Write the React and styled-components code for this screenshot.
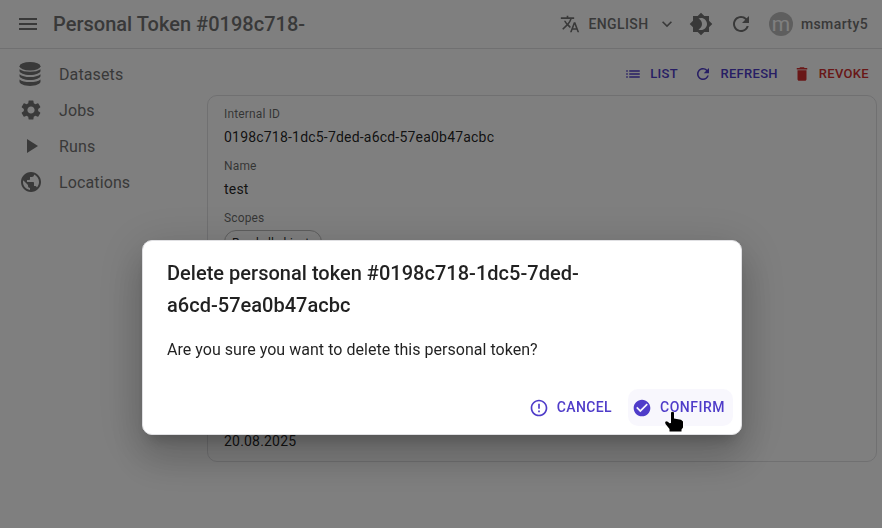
import React from "react";
import styled, { createGlobalStyle } from "styled-components";
import {
  MdMenu, MdTranslate, MdExpandMore, MdBrightness4, MdRefresh, MdList, MdDelete,
  MdSettings, MdPlayArrow, MdPublic, MdErrorOutline, MdCheckCircle,
} from "react-icons/md";

const GlobalStyle = createGlobalStyle`
  *, *::before, *::after { box-sizing: border-box; }
  html, body { margin: 0; height: 528px; overflow: hidden; }
  body { background: #fff; color: rgba(0, 0, 0, 0.87); font-family: Roboto, sans-serif; }
`;

const Page = styled.div`
  height: 528px;
  display: flex;
  flex-direction: column;
`;

const AppBar = styled.header`
  height: 49px;
  flex: none;
  display: flex;
  align-items: center;
  padding: 0 14px 0 16px;
  border-bottom: 1px solid #e0e0e3;
  color: #737373;
  svg { display: block; flex: none; }
`;

const BarTitle = styled.h1`
  margin: 0 auto 0 13px;
  font-size: 20px;
  font-weight: 500;
  line-height: 32px;
  letter-spacing: 0.02px;
`;

const BarButton = styled.button`
  display: flex;
  align-items: center;
  gap: ${(p) => p.$gap || 0}px;
  margin: 0 0 0 ${(p) => p.$space || 0}px;
  padding: 0;
  border: 0;
  background: none;
  color: inherit;
  font: 500 14px/24.5px Roboto, sans-serif;
  letter-spacing: 0.4px;
`;

const Avatar = styled.span`
  width: 24px;
  height: 24px;
  border-radius: 50%;
  display: flex;
  align-items: center;
  justify-content: center;
  background: #bdbdbd;
  color: #fff;
  font-size: 21px;
  font-weight: 400;
  line-height: 21px;
  letter-spacing: 0;
`;

const Body = styled.div`
  flex: 1;
  display: flex;
`;

const Sidebar = styled.nav`
  width: 207px;
  flex: none;
  padding-top: 8px;
`;

const NavItem = styled.a`
  height: 36px;
  display: flex;
  align-items: center;
  padding-left: 16px;
  color: #737373;
  font-size: 16px;
  line-height: 24px;
  letter-spacing: 0.12px;
`;

const NavIcon = styled.span`
  width: 43px;
  padding: 0 0 2px ${(p) => p.$inset}px;
  display: flex;
`;

const Main = styled.main`
  width: 670px;
`;

const Actions = styled.div`
  height: 46px;
  display: flex;
  justify-content: flex-end;
  align-items: center;
  gap: 15px;
  padding: 3px 8px 0 0;
`;

const ActionButton = styled.button`
  display: flex;
  align-items: center;
  gap: 8px;
  margin-right: ${(p) => p.$space || 0}px;
  padding: 0;
  border: 0;
  background: none;
  color: ${(p) => p.$color || "#4f3cc9"};
  font: 500 13px/23px Roboto, sans-serif;
  letter-spacing: 0.3px;
  svg { display: block; }
`;

const Card = styled.section`
  height: 367px;
  padding: 8px 16px;
  border: 1px solid #e0e0e3;
  border-radius: 10px;
`;

const Field = styled.div`
  height: 52px;
`;

const Label = styled.div`
  height: 20px;
  color: rgba(0, 0, 0, 0.6);
  font-size: 12px;
  line-height: 20px;
  letter-spacing: 0.15px;
`;

const Value = styled.div`
  padding-top: 3px;
  font-size: 14px;
  line-height: 20px;
  letter-spacing: 0.2px;
`;

const Chip = styled.span`
  display: inline-flex;
  align-items: center;
  height: 24px;
  width: 98px;
  margin-top: 2px;
  padding: 2px 7px 0;
  border: 1px solid #bdbdbd;
  border-radius: 12px;
  font-size: 12px;
  letter-spacing: -0.08px;
  white-space: nowrap;
`;

const DateField = styled.div`
  height: 52px;
  margin-top: 148px;
`;

const Backdrop = styled.div`
  position: fixed;
  inset: 0;
  padding: 240px 0 0 142px;
  background: rgba(0, 0, 0, 0.5);
`;

const Dialog = styled.div`
  width: 600px;
  height: 195px;
  border: 1px solid #e0e0e3;
  border-radius: 10px;
  background: #fff;
  box-shadow: 0 11px 15px -7px rgba(0, 0, 0, 0.2), 0 24px 38px 3px rgba(0, 0, 0, 0.14),
    0 9px 46px 8px rgba(0, 0, 0, 0.12);
`;

const DialogTitle = styled.h2`
  margin: 0;
  padding: 16px 24px;
  font-size: 20px;
  font-weight: 500;
  line-height: 32px;
  letter-spacing: 0.02px;
`;

const DialogText = styled.p`
  margin: 0;
  padding: 1px 24px 19px;
  font-size: 16px;
  line-height: 24px;
  letter-spacing: 0.03px;
`;

const DialogActions = styled.div`
  display: flex;
  justify-content: flex-end;
  gap: 8px;
  padding: 8px;
`;

const DialogButton = styled.button`
  position: relative;
  height: 37px;
  display: flex;
  align-items: center;
  gap: 8px;
  padding: 0 8px 0 4px;
  border: 0;
  border-radius: 10px;
  background: ${(p) => (p.$hovered ? "rgba(79, 60, 201, 0.04)" : "transparent")};
  color: #4f3cc9;
  font: 500 14px/25px Roboto, sans-serif;
  letter-spacing: ${(p) => (p.$hovered ? 0.5 : 0.4)}px;
`;

const Pointer = styled.svg`
  position: absolute;
  left: 36px;
  top: 21px;
`;

const DatabaseIcon = () => (
  <svg width="22" height="24" viewBox="0 0 22 24" fill="currentColor">
    <ellipse cx="11" cy="4.200" rx="10.500" ry="4.200" />
    <path d="M.5 7.200Q4 9.700 11 9.700t10.500-2.500v1.700c0 1.900-4.700 4-10.500 4S.5 10.800.5 8.900z" />
    <path d="M.5 12.200Q4 15 11 15t10.500-2.800v1.900c0 1.900-4.700 4-10.500 4S.5 16 .5 14.100z" />
    <path d="M.5 17.400Q4 20.100 11 20.100t10.500-2.700v2.400c0 2-4.700 4.200-10.500 4.200S.5 21.800.5 19.800z" />
  </svg>
);

const navItems = [
  { label: "Datasets", icon: <DatabaseIcon />, inset: 2.5 },
  { label: "Jobs", icon: <MdSettings size={24} />, inset: 3 },
  { label: "Runs", icon: <MdPlayArrow size={24} />, inset: 3 },
  { label: "Locations", icon: <MdPublic size={24} />, inset: 3 },
];

export default function App() {
  return (
    <>
      <GlobalStyle />
      <Page>
        <AppBar>
          <MdMenu size={24} />
          <BarTitle>Personal Token #0198c718-</BarTitle>
          <BarButton $gap={8.3}>
            <MdTranslate size={20} />
            ENGLISH
            <MdExpandMore size={20} />
          </BarButton>
          <BarButton $space={12}><MdBrightness4 size={24} /></BarButton>
          <BarButton $space={16}><MdRefresh size={24} /></BarButton>
          <BarButton $space={16} $gap={8}>
            <Avatar>m</Avatar>
            msmarty5
          </BarButton>
        </AppBar>
        <Body>
          <Sidebar>
            {navItems.map((item) => (
              <NavItem key={item.label}>
                <NavIcon $inset={item.inset}>{item.icon}</NavIcon>
                {item.label}
              </NavItem>
            ))}
          </Sidebar>
          <Main>
            <Actions>
              <ActionButton $space={1.5}><MdList size={18} />LIST</ActionButton>
              <ActionButton><MdRefresh size={18} />REFRESH</ActionButton>
              <ActionButton $color="#d32f2f"><MdDelete size={18} />REVOKE</ActionButton>
            </Actions>
            <Card>
              <Field>
                <Label>Internal ID</Label>
                <Value>0198c718-1dc5-7ded-a6cd-57ea0b47acbc</Value>
              </Field>
              <Field>
                <Label>Name</Label>
                <Value>test</Value>
              </Field>
              <Field>
                <Label>Scopes</Label>
                <Chip>Read all objects</Chip>
              </Field>
              <DateField>
                <Label>Valid until</Label>
                <Value>20.08.2025</Value>
              </DateField>
            </Card>
          </Main>
        </Body>
      </Page>
      <Backdrop>
        <Dialog role="dialog">
          <DialogTitle>Delete personal token #0198c718-1dc5-7ded-<br />a6cd-57ea0b47acbc</DialogTitle>
          <DialogText>Are you sure you want to delete this personal token?</DialogText>
          <DialogActions>
            <DialogButton><MdErrorOutline size={20} />CANCEL</DialogButton>
            <DialogButton $hovered>
              <MdCheckCircle size={20} />CONFIRM
              <Pointer width="22" height="24" viewBox="0 0 22 24">
                <path
                  d="M7 3q0-1.300 1.500-1.300T10 3v5.500l7 1.300 2 1.700v6l-1.500 2v2H5.500V19l-4-5q-1-2 .5-2.800 2 0 3.500 2L7 13z"
                  stroke="#fff" strokeWidth="1" paintOrder="stroke"
                />
              </Pointer>
            </DialogButton>
          </DialogActions>
        </Dialog>
      </Backdrop>
    </>
  );
}
